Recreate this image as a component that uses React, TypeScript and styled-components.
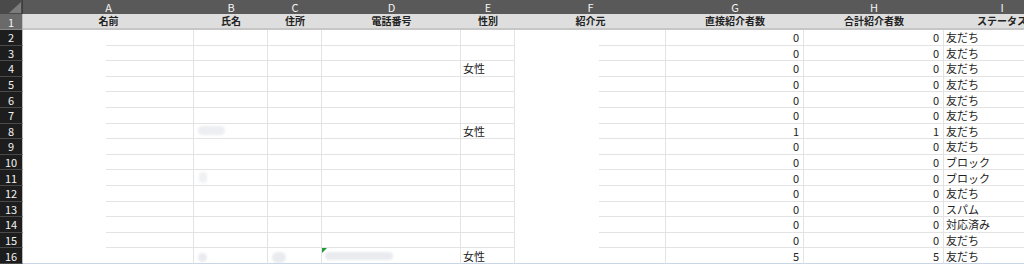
import React from "react";
import styled, { createGlobalStyle, css } from "styled-components";

const Global = createGlobalStyle`
  html, body { margin: 0; padding: 0; background: #ffffff; }
  body { font-family: "Noto Sans CJK JP", "Noto Sans", sans-serif; }
`;

const COLS = [23, 171, 74, 54, 139, 54, 151, 138, 140, 116];
const LETTERS = ["A", "B", "C", "D", "E", "F", "G", "H", "I"];
const TITLES = ["名前", "氏名", "住所", "電話番号", "性別", "紹介元", "直接紹介者数", "合計紹介者数", "ステータス"];

const Viewport = styled.div`
  width: 1024px;
  height: 264px;
  overflow: hidden;
`;

const Sheet = styled.div`
  display: grid;
  grid-template-columns: ${COLS.map((c) => `${c}px`).join(" ")};
  grid-template-rows: 14px 16px repeat(15, 15.6px);
  width: 1060px;
  font-size: 11px;
  color: #222222;
`;

const Corner = styled.div`
  background: #4a4a4a;
  display: flex;
  align-items: flex-end;
  justify-content: flex-end;
  border-right: 1px solid #3c3c3c;
  box-sizing: border-box;
  padding: 0 1px 1px 0;
`;

const ColLetter = styled.div`
  background: #595959;
  color: #f4f4f4;
  font-size: 11px;
  line-height: 14px;
  text-align: center;
`;

const RowNum = styled.div<{ $active?: boolean }>`
  box-sizing: border-box;
  background: ${(p) => (p.$active ? "#6a6a6a" : "#1d1d1d")};
  color: #f2f2f2;
  font-size: 11px;
  line-height: 14px;
  text-align: center;
  border-bottom: 1px solid ${(p) => (p.$active ? "#8a8a8a" : "#4a4a4a")};
  border-right: 1px solid #bdbdbd;
  display: flex;
  align-items: center;
  justify-content: center;
`;

const TitleCell = styled.div`
  box-sizing: border-box;
  background: #dedede;
  border-bottom: 2px solid #c6c6c6;
  font-size: 10px;
  font-weight: 700;
  line-height: 14px;
  text-align: center;
  white-space: nowrap;
  overflow: hidden;
`;

const Cell = styled.div<{ $align?: "left" | "right"; $partial?: number; $last?: boolean }>`
  position: relative;
  box-sizing: border-box;
  border-right: 1px solid #e3e3e3;
  border-bottom: 1px solid ${(p) => (p.$last ? "#c9d6e8" : "#e3e3e3")};
  display: flex;
  align-items: center;
  justify-content: ${(p) => (p.$align === "right" ? "flex-end" : "flex-start")};
  padding: ${(p) => (p.$align === "right" ? "0 4px 0 0" : "0 0 0 2px")};
  white-space: nowrap;
  overflow: hidden;
  line-height: 14px;
  ${(p) =>
    p.$partial !== undefined &&
    !p.$last &&
    css`
      border-bottom: 1px solid transparent;
      background: linear-gradient(#e3e3e3, #e3e3e3) no-repeat right bottom / ${p.$partial}px 1px;
      background-origin: border-box;
      background-clip: border-box;
    `}
`;

const Blob = styled.span<{ $w: number; $h: number; $ml: number; $mt?: number; $tone?: string }>`
  display: inline-block;
  width: ${(p) => p.$w}px;
  height: ${(p) => p.$h}px;
  margin-left: ${(p) => p.$ml}px;
  margin-top: ${(p) => p.$mt ?? 0}px;
  border-radius: ${(p) => p.$h / 2}px;
  background: ${(p) => p.$tone ?? "#e9ebef"};
  filter: blur(1.2px);
`;

const Flag = styled.span`
  position: absolute;
  left: 0;
  top: 0;
  width: 0;
  height: 0;
  border-top: 5px solid #1f9a3a;
  border-right: 5px solid transparent;
`;

type Row = {
  e?: string;
  g: number;
  h: number;
  i: string;
  b?: React.ReactNode;
  c?: React.ReactNode;
  d?: React.ReactNode;
};

const rows: Row[] = [
  { g: 0, h: 0, i: "友だち" },
  { g: 0, h: 0, i: "友だち" },
  { e: "女性", g: 0, h: 0, i: "友だち" },
  { g: 0, h: 0, i: "友だち" },
  { g: 0, h: 0, i: "友だち" },
  { g: 0, h: 0, i: "友だち" },
  { e: "女性", g: 1, h: 1, i: "友だち", b: <Blob $w={27} $h={9} $ml={2} $tone="#eceef1" /> },
  { g: 0, h: 0, i: "友だち" },
  { g: 0, h: 0, i: "ブロック" },
  { g: 0, h: 0, i: "ブロック", b: <Blob $w={8} $h={11} $ml={3} $tone="#f0f1f3" /> },
  { g: 0, h: 0, i: "友だち" },
  { g: 0, h: 0, i: "スパム" },
  { g: 0, h: 0, i: "対応済み" },
  { g: 0, h: 0, i: "友だち" },
  {
    e: "女性",
    g: 5,
    h: 5,
    i: "友だち",
    b: <Blob $w={9} $h={9} $ml={2} $mt={3} />,
    c: <Blob $w={14} $h={11} $ml={2} $mt={4} />,
    d: (
      <>
        <Flag />
        <Blob $w={68} $h={8} $ml={1} $mt={0} />
      </>
    ),
  },
];

const CornerMark = () => (
  <svg width="12" height="11" viewBox="0 0 12 11">
    <polygon points="12,0 12,11 0,11" fill="#7c7c7c" />
  </svg>
);

export default function App() {
  return (
    <Viewport>
      <Global />
      <Sheet>
        <Corner>
          <CornerMark />
        </Corner>
        {LETTERS.map((l) => (
          <ColLetter key={l}>{l}</ColLetter>
        ))}

        <RowNum $active>1</RowNum>
        {TITLES.map((t) => (
          <TitleCell key={t}>{t}</TitleCell>
        ))}

        {rows.map((r, idx) => {
          const last = idx === rows.length - 1;
          return (
            <React.Fragment key={idx}>
              <RowNum>{idx + 2}</RowNum>
              <Cell $partial={88} $last={last} />
              <Cell $last={last}>{r.b}</Cell>
              <Cell $last={last}>{r.c}</Cell>
              <Cell $last={last}>{r.d}</Cell>
              <Cell $last={last}>{r.e}</Cell>
              <Cell $partial={67} $last={last} />
              <Cell $align="right" $last={last}>{r.g}</Cell>
              <Cell $align="right" $last={last}>{r.h}</Cell>
              <Cell $last={last}>{r.i}</Cell>
            </React.Fragment>
          );
        })}
      </Sheet>
    </Viewport>
  );
}
